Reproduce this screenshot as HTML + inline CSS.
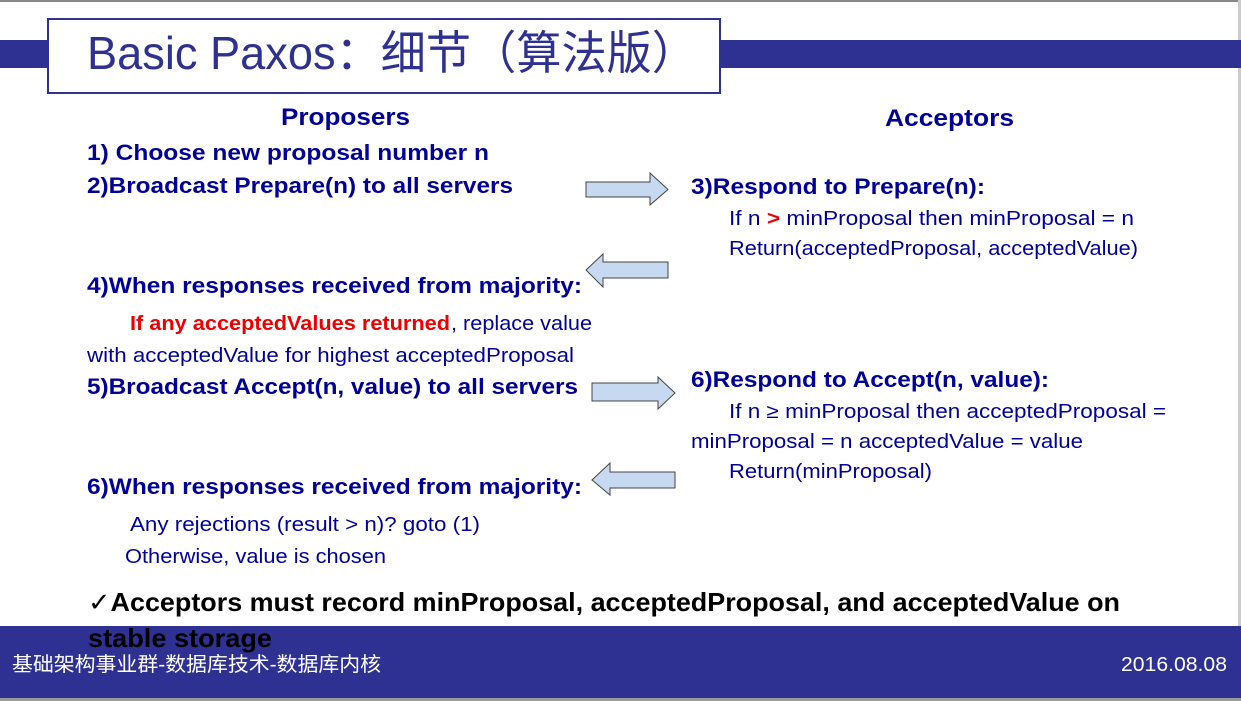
<!DOCTYPE html>
<html><head><meta charset="utf-8"><style>
html,body{margin:0;padding:0;background:#fff;}
svg{display:block;}
.b{font-family:"Liberation Sans",sans-serif;font-weight:bold;fill:#000099;}
.n{font-family:"Liberation Sans",sans-serif;fill:#000099;}
</style></head><body>
<svg width="1241" height="701" viewBox="0 0 1241 701" xmlns="http://www.w3.org/2000/svg">
<rect x="0" y="0" width="1241" height="701" fill="#fff"/>
<rect x="0" y="0" width="1241" height="2" fill="#888"/>
<rect x="1238" y="0" width="3" height="701" fill="#ccc"/>
<rect x="0" y="40" width="1241" height="28" fill="#2e3192"/>
<rect x="48" y="19" width="672" height="74" fill="#fff" stroke="#2e3192" stroke-width="2"/>
<text x="87" y="69" font-family="Liberation Sans, 'Noto Sans CJK SC', sans-serif" font-size="46" fill="#2e3192" textLength="610" lengthAdjust="spacingAndGlyphs">Basic Paxos：细节（算法版）</text>

<text class="b" x="281" y="125" font-size="24" textLength="129" lengthAdjust="spacingAndGlyphs">Proposers</text>
<text class="b" x="885" y="126" font-size="24" textLength="129" lengthAdjust="spacingAndGlyphs">Acceptors</text>

<text class="b" x="87" y="160" font-size="22" textLength="402" lengthAdjust="spacingAndGlyphs">1) Choose new proposal number n</text>
<text class="b" x="87" y="193" font-size="22" textLength="426" lengthAdjust="spacingAndGlyphs">2)Broadcast Prepare(n) to all servers</text>
<text class="b" x="691" y="194" font-size="22" textLength="294" lengthAdjust="spacingAndGlyphs">3)Respond to Prepare(n):</text>
<text class="n" x="729" y="225" font-size="20" textLength="405" lengthAdjust="spacingAndGlyphs">If n <tspan fill="#e00" font-weight="bold">&gt;</tspan> minProposal then minProposal = n</text>
<text class="n" x="729" y="255" font-size="20" textLength="409" lengthAdjust="spacingAndGlyphs">Return(acceptedProposal, acceptedValue)</text>

<text class="b" x="87" y="293" font-size="22" textLength="495" lengthAdjust="spacingAndGlyphs">4)When responses received from majority:</text>
<text x="130" y="330" font-size="20" font-family="Liberation Sans,sans-serif" font-weight="bold" fill="#e00" textLength="320" lengthAdjust="spacingAndGlyphs">If any acceptedValues returned</text>
<text class="n" x="451" y="330" font-size="20" textLength="141" lengthAdjust="spacingAndGlyphs">, replace value</text>
<text class="n" x="87" y="362" font-size="20" textLength="487" lengthAdjust="spacingAndGlyphs">with acceptedValue for highest acceptedProposal</text>
<text class="b" x="87" y="394" font-size="22" textLength="491" lengthAdjust="spacingAndGlyphs">5)Broadcast Accept(n, value) to all servers</text>

<text class="b" x="691" y="387" font-size="22" textLength="358" lengthAdjust="spacingAndGlyphs">6)Respond to Accept(n, value):</text>
<text class="n" x="729" y="418" font-size="20" textLength="437" lengthAdjust="spacingAndGlyphs">If n ≥ minProposal then acceptedProposal =</text>
<text class="n" x="691" y="448" font-size="20" textLength="392" lengthAdjust="spacingAndGlyphs">minProposal = n acceptedValue = value</text>
<text class="n" x="729" y="478" font-size="20" textLength="203" lengthAdjust="spacingAndGlyphs">Return(minProposal)</text>

<text class="b" x="87" y="494" font-size="22" textLength="495" lengthAdjust="spacingAndGlyphs">6)When responses received from majority:</text>
<text class="n" x="130" y="531" font-size="20" textLength="350" lengthAdjust="spacingAndGlyphs">Any rejections (result &gt; n)? goto (1)</text>
<text class="n" x="125" y="563" font-size="20" textLength="261" lengthAdjust="spacingAndGlyphs">Otherwise, value is chosen</text>

<g fill="#c6d9f1" stroke="#444" stroke-width="1">
<polygon points="586,182 650,182 650,173 668,189.5 650,205 650,197 586,197"/>
<polygon points="586,270 603,254 603,262 668,262 668,278 603,278 603,287"/>
<polygon points="592,383 658,383 658,377 675,393 658,409 658,401 592,401"/>
<polygon points="592,480 610,463 610,472 675,472 675,488 610,488 610,495"/>
</g>

<rect x="0" y="626" width="1241" height="72" fill="#2e3192"/>
<rect x="0" y="698" width="1241" height="3" fill="#999"/>
<text x="88" y="611" font-size="26" font-family="Liberation Sans,'DejaVu Sans',sans-serif" font-weight="bold" fill="#000" textLength="1032" lengthAdjust="spacingAndGlyphs">✓Acceptors must record minProposal, acceptedProposal, and acceptedValue on</text>
<text x="88" y="647" font-size="26" font-family="Liberation Sans,sans-serif" font-weight="bold" fill="#000" textLength="184" lengthAdjust="spacingAndGlyphs">stable storage</text>
<text x="12" y="671" font-size="20" font-family="Liberation Sans,'Noto Sans CJK SC',sans-serif" fill="#fff" textLength="369" lengthAdjust="spacingAndGlyphs">基础架构事业群-数据库技术-数据库内核</text>
<text x="1121" y="671" font-size="20" font-family="Liberation Sans,sans-serif" fill="#fff" textLength="106" lengthAdjust="spacingAndGlyphs">2016.08.08</text>
</svg>
</body></html>
